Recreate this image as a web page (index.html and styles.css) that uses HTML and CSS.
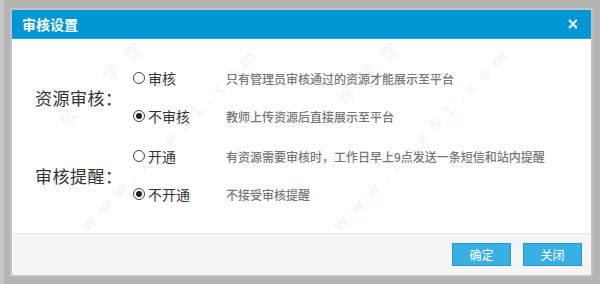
FILE: index.html
```html
<!DOCTYPE html>
<html lang="zh-CN">
<head>
    <meta charset="UTF-8">
    <title>审核设置</title>
    <link rel="stylesheet" href="styles.css">
</head>
<body>
    <div class="dialog">
        <div class="dialog-header">
            <h2>审核设置</h2>
            <span class="close">×</span>
        </div>

        <div class="dialog-body">
            <!-- watermark -->
            <span class="mark mark-cn" style="left: 44px; top: 78px;">软 件 学 堂</span>
            <span class="mark mark-url" style="left: 66px; top: 184px;">www.xue51.com</span>
            <span class="mark mark-cn" style="left: 300px; top: 78px;">软 件 学 堂</span>
            <span class="mark mark-url" style="left: 318px; top: 184px;">www.xue51.com</span>

            <div class="group">
                <div class="group-label">资源审核：</div>
                <div class="options">
                    <div class="option">
                        <span class="radio"></span>
                        <span class="option-name">审核</span>
                        <span class="option-desc">只有管理员审核通过的资源才能展示至平台</span>
                    </div>
                    <div class="option">
                        <span class="radio checked"></span>
                        <span class="option-name">不审核</span>
                        <span class="option-desc">教师上传资源后直接展示至平台</span>
                    </div>
                </div>
            </div>

            <div class="group">
                <div class="group-label">审核提醒：</div>
                <div class="options">
                    <div class="option">
                        <span class="radio"></span>
                        <span class="option-name">开通</span>
                        <span class="option-desc">有资源需要审核时，工作日早上9点发送一条短信和站内提醒</span>
                    </div>
                    <div class="option">
                        <span class="radio checked"></span>
                        <span class="option-name">不开通</span>
                        <span class="option-desc">不接受审核提醒</span>
                    </div>
                </div>
            </div>
        </div>

        <div class="dialog-footer">
            <button class="btn">确定</button>
            <button class="btn">关闭</button>
        </div>
    </div>
</body>
</html>
```

FILE: styles.css
```css
* {
    margin: 0;
    padding: 0;
    box-sizing: border-box;
}

body {
    font-family: "Noto Sans CJK SC", "Liberation Sans", sans-serif;
    background: #b4b4b4;
    width: 600px;
    height: 284px;
    overflow: hidden;
    border-left: 4px solid #c6c6c6;
    padding: 10px 0 0 8px;
}

.dialog {
    width: 579px;
    height: 265px;
    background: white;
    box-shadow: 0 0 0 2px #c2c2c2;
    display: flex;
    flex-direction: column;
}

.dialog-header {
    height: 29px;
    background: #0096d6;
    color: white;
    display: flex;
    align-items: center;
    justify-content: space-between;
    padding: 0 12px 0 10px;
    border-bottom: 1px solid #1ea4de;
}

.dialog-header h2 {
    font-size: 14px;
    font-weight: bold;
}

.close {
    font-family: "DejaVu Sans", sans-serif;
    font-size: 15px;
    font-weight: bold;
    line-height: 1;
}

.dialog-body {
    position: relative;
    flex: 1;
    padding: 20px 0 0 23px;
}

.group {
    position: relative;
    display: flex;
    align-items: center;
    margin-bottom: 2px;
}

.group-label {
    width: 98px;
    font-size: 17px;
    color: #333;
    letter-spacing: 0.5px;
}

.option {
    display: flex;
    align-items: center;
    height: 38px;
}

.radio {
    width: 12px;
    height: 12px;
    border: 1px solid #444;
    border-radius: 50%;
    position: relative;
    margin-right: 3px;
}

.radio.checked::after {
    content: "";
    position: absolute;
    left: 2px;
    top: 2px;
    width: 6px;
    height: 6px;
    border-radius: 50%;
    background: #222;
}

.option-name {
    width: 78px;
    font-size: 14px;
    color: #333;
}

.option-desc {
    font-size: 12px;
    color: #777;
    font-weight: 500;
}

.mark {
    position: absolute;
    transform: rotate(-46deg);
    transform-origin: left top;
    color: rgba(40, 130, 210, 0.08);
    font-weight: bold;
    white-space: nowrap;
    line-height: 1;
    pointer-events: none;
}

.mark-cn {
    font-size: 17px;
    letter-spacing: 5px;
}

.mark-url {
    font-family: "DejaVu Sans", sans-serif;
    font-size: 16px;
    letter-spacing: 8px;
}

.dialog-footer {
    height: 42px;
    background: #f5f5f5;
    border-top: 1px solid #e6e6e6;
    display: flex;
    align-items: center;
    justify-content: flex-end;
    gap: 12px;
    padding-right: 9px;
}

.btn {
    width: 59px;
    height: 23px;
    background: #3aafe4;
    border: 1px solid #2299d2;
    color: white;
    font-family: inherit;
    font-size: 12px;
    cursor: pointer;
}
```
